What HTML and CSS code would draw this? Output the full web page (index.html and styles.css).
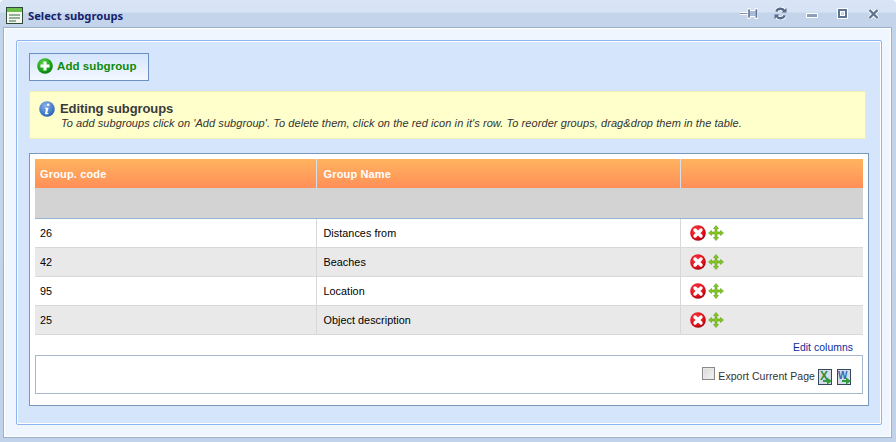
FILE: index.html
```html
<!DOCTYPE html>
<html lang="en">
<head>
<meta charset="utf-8">
<title>Select subgroups</title>
<link rel="stylesheet" href="styles.css">
</head>
<body>
<svg class="defs" width="0" height="0" aria-hidden="true">
  <defs>
    <radialGradient id="redg" cx="40%" cy="35%" r="70%"><stop offset="0" stop-color="#f8404a"/><stop offset="0.7" stop-color="#e00d18"/><stop offset="1" stop-color="#8e0610"/></radialGradient>
    <radialGradient id="greeng" cx="40%" cy="30%" r="75%"><stop offset="0" stop-color="#5fd04f"/><stop offset="0.7" stop-color="#12a012"/><stop offset="1" stop-color="#0a6e12"/></radialGradient>
    <radialGradient id="blueg" cx="40%" cy="30%" r="75%"><stop offset="0" stop-color="#8db2e8"/><stop offset="0.7" stop-color="#3f78c8"/><stop offset="1" stop-color="#2a5aa8"/></radialGradient>
    <symbol id="del" viewBox="0 0 16 16">
      <circle cx="8" cy="8" r="7.800" fill="url(#redg)"/>
      <path d="M5 5l6 6M11 5l-6 6" stroke="#fff" stroke-width="3.400" stroke-linecap="round"/>
    </symbol>
    <symbol id="move" viewBox="0 0 16 16">
      <path d="M8 .5L10.500 3.500H9V7H12.500V5.500L15.500 8L12.500 10.500V9H9V12.500H10.500L8 15.500L5.500 12.500H7V9H3.500V10.500L.5 8L3.500 5.500V7H7V3.500H5.500Z" fill="#86c822" stroke="#5f9e1a" stroke-width=".6"/>
    </symbol>
  </defs>
</svg>
<div class="window">
  <header class="titlebar">
    <svg class="title-icon" width="17" height="17" viewBox="0 0 17 17">
      <rect x=".5" y=".5" width="16" height="16" fill="#f7f7ef" stroke="#2f4a3a"/>
      <rect x="1" y="1" width="15" height="4" fill="#6cc04a"/>
      <path d="M3 8h11M3 11h11M3 14h7" stroke="#2c6a40"/>
    </svg>
    <span class="title-text">Select subgroups</span>
    <div class="title-tools">
      <svg class="tool tool-pin" width="18" height="11" viewBox="0 0 18 11"><path d="M0 5.500h8" stroke="#fff" stroke-width="3"/><path d="M0 5.500h8" stroke="#8090ac"/><path d="M8 .5h2v2h5v-2h2.500v10H15v-2h-5v2H8z" fill="#a9bbd8" stroke="#fff"/><path d="M9 1.500v8M16.500 1.500v8" stroke="#64748f" stroke-width="1.500"/></svg>
      <svg class="tool tool-refresh" width="13" height="13" viewBox="0 0 13 13"><path d="M10.500 4A4.600 4.600 0 0 0 2.300 4.600M2.500 9A4.600 4.600 0 0 0 10.700 8.400" fill="none" stroke="#fff" stroke-width="4"/><path d="M10.500 4A4.600 4.600 0 0 0 2.300 4.600M2.500 9A4.600 4.600 0 0 0 10.700 8.400" fill="none" stroke="#566a88" stroke-width="2.400"/><path d="M7.500 5.500h5V1zM5.500 7.500h-5V12z" fill="#566a88"/></svg>
      <svg class="tool tool-min" width="12" height="5" viewBox="0 0 12 5"><rect x=".5" y=".5" width="11" height="4" fill="#8c9fba" stroke="#fff"/></svg>
      <svg class="tool tool-max" width="11" height="11" viewBox="0 0 11 11"><rect x="2" y="2" width="7" height="7" fill="none" stroke="#fff" stroke-width="4"/><rect x="2" y="2" width="7" height="7" fill="none" stroke="#5f7492" stroke-width="2"/></svg>
      <svg class="tool tool-close" width="11" height="10" viewBox="0 0 11 10"><path d="M1.500 1l8 8M9.500 1l-8 8" stroke="#fff" stroke-width="4"/><path d="M1.500 1l8 8M9.500 1l-8 8" stroke="#5f7492" stroke-width="2.400"/></svg>
    </div>
  </header>
  <div class="frame">
    <main class="panel">
      <button class="add-btn" type="button">
        <svg width="16" height="16" viewBox="0 0 16 16"><circle cx="8" cy="8" r="7.800" fill="url(#greeng)"/><path d="M8 3.500v9M3.500 8h9" stroke="#fff" stroke-width="3"/></svg>
        <span>Add subgroup</span>
      </button>
      <section class="notice">
        <svg class="notice-icon" width="16" height="16" viewBox="0 0 16 16"><circle cx="8" cy="8" r="7.800" fill="url(#blueg)"/><circle cx="9.200" cy="3.800" r="1.300" fill="#fff"/><path d="M6.300 6.800h3.200l-1.300 5.200h1.300l-.3 1.200H5.900l1.100-5.200H6z" fill="#fff"/></svg>
        <div class="notice-body">
          <h2 class="notice-title">Editing subgroups</h2>
          <p class="notice-text">To add subgroups click on 'Add subgroup'. To delete them, click on the red icon in it's row. To reorder groups, drag&amp;drop them in the table.</p>
        </div>
      </section>
      <section class="grid-frame">
        <table class="grid">
          <colgroup><col class="col-code"><col class="col-name"><col></colgroup>
          <thead>
            <tr class="head-row"><th>Group. code</th><th>Group Name</th><th></th></tr>
            <tr class="filter-row"><td colspan="3"></td></tr>
          </thead>
          <tbody>
            <tr><td>26</td><td>Distances from</td><td class="actions"><svg width="16" height="16"><use href="#del"/></svg><svg class="move" width="16" height="16"><use href="#move"/></svg></td></tr>
            <tr class="alt"><td>42</td><td>Beaches</td><td class="actions"><svg width="16" height="16"><use href="#del"/></svg><svg class="move" width="16" height="16"><use href="#move"/></svg></td></tr>
            <tr><td>95</td><td>Location</td><td class="actions"><svg width="16" height="16"><use href="#del"/></svg><svg class="move" width="16" height="16"><use href="#move"/></svg></td></tr>
            <tr class="alt"><td>25</td><td>Object description</td><td class="actions"><svg width="16" height="16"><use href="#del"/></svg><svg class="move" width="16" height="16"><use href="#move"/></svg></td></tr>
          </tbody>
        </table>
        <div class="edit-row"><a class="edit-link" href="#">Edit columns</a></div>
        <div class="export-box">
          <span class="check"></span>
          <span class="export-label">Export Current Page</span>
          <svg class="doc" width="14" height="16" viewBox="0 0 14 16"><rect x=".5" y=".5" width="13" height="15" fill="#d5dde8" stroke="#33475f"/><text x="2" y="11" class="doc-x">X</text><path d="M5 11h4V8.500l5 3.500-5 3.500V13H5z" fill="#2f9d3c"/></svg>
          <svg class="doc" width="14" height="16" viewBox="0 0 14 16"><rect x=".5" y=".5" width="13" height="15" fill="#d5dde8" stroke="#33475f"/><text x="1" y="10" class="doc-w">W</text><path d="M5 11h4V8.500l5 3.500-5 3.500V13H5z" fill="#2f9d3c"/></svg>
        </div>
      </section>
    </main>
  </div>
</div>
</body>
</html>
```
FILE: styles.css
```css
* { box-sizing: border-box; }
html, body { margin: 0; padding: 0; }
body { width: 896px; height: 442px; overflow: hidden; font-family: "Liberation Sans", Arial, sans-serif; background: #fff; }
.defs { display: block; height: 0; }
.window { height: 442px; display: flex; flex-direction: column; padding: 0 4px 4px 3px; background: linear-gradient(#d9e5f5 0, #d6e3f4 12px, #c4d5eb 13px, #c1d3ea 100%); border-radius: 4px 4px 0 0; }
.titlebar { height: 27px; flex: none; display: flex; align-items: center; padding: 0 0 0 3px; }
.title-icon { margin-top: 4px; }
.title-text { margin: 3px 0 0 5px; font-family: "Noto Sans", sans-serif; font-size: 11.200px; font-weight: bold; color: #15226e; }
.title-tools { margin-left: auto; display: flex; align-items: center; padding-right: 13px; }
.tool { display: block; }
.tool-pin { margin-right: 16px; }
.tool-refresh { margin-right: 19px; }
.tool-min { margin-right: 19px; margin-top: 3px; }
.tool-max { margin-right: 20px; }
.frame { flex: 1; border: 1px solid #9cb0c8; box-shadow: inset 0 0 0 1px #fff; background: #eff6ff; padding: 12px 11px 12px 12px; display: flex; }
.panel { flex: 1; display: flex; flex-direction: column; align-items: flex-start; background: #d5e5fb; border: 1px solid #8cb6f0; box-shadow: inset 0 0 0 1px #fff; border-radius: 2px; padding: 12px 12px 0 12px; }
.add-btn { width: 120px; height: 28px; display: flex; align-items: center; gap: 4px; padding: 0 0 3px 7px; border: 1px solid #6c8fc4; background: linear-gradient(#d5e5fb, #f3f8ff); font-family: "Liberation Sans", Arial, sans-serif; font-size: 11.500px; font-weight: bold; letter-spacing: .08px; color: #0b8a0b; }
.notice { width: 837px; height: 48px; margin-top: 10px; display: flex; gap: 5px; padding: 9px 0 0 9px; background: #ffffcc; border: 1px solid #f0eeb8; }
.notice-icon { flex: none; }
.notice-title { margin: 0; font-size: 13px; line-height: 16px; font-weight: bold; letter-spacing: -.1px; color: #3a3a3a; }
.notice-text { margin: 0 0 0 1px; font-size: 11px; line-height: 13px; font-style: italic; color: #333; white-space: nowrap; letter-spacing: .07px; }
.grid-frame { width: 840px; margin-top: 14px; height: 253px; padding: 5px; background: #fff; border: 1px solid #7a98bc; }
.grid { width: 828px; border-collapse: collapse; table-layout: fixed; font-size: 10.800px; color: #000; }
.col-code { width: 281px; }
.col-name { width: 364px; }
.head-row th { height: 29px; padding: 0 7px; text-align: left; font-size: 11px; font-weight: bold; letter-spacing: .15px; color: #fff; background: linear-gradient(#ffb35f, #ff8f58); border-right: 1px solid #d8dfe8; }
.head-row th:first-child { padding-left: 5px; }
.head-row th:last-child { border-right: 0; }
.filter-row td { height: 30px; background: #d3d3d3; border-bottom: 1px solid #95b3d4; padding: 0; }
tbody td { height: 29px; padding: 0 7px; border-right: 1px solid #d8d8d8; border-bottom: 1px solid #d8d8d8; background: #fff; white-space: nowrap; letter-spacing: .05px; }
tbody td:first-child { padding-left: 5px; }
tbody td:last-child { border-right: 0; }
tbody tr.alt td { background: #e9e9e9; }
.actions svg { display: inline-block; vertical-align: middle; }
.actions .move { margin-left: 2px; }
td.actions { padding: 0 0 0 9px; line-height: 0; }
.edit-row { height: 20px; display: flex; align-items: center; justify-content: flex-end; padding: 6px 10px 0 0; }
.edit-link { font-size: 10.400px; color: #0b2e9c; text-decoration: none; letter-spacing: .05px; }
.export-box { width: 828px; height: 39px; display: flex; align-items: center; justify-content: flex-end; padding: 0 11px 0 0; border: 1px solid #a6b8ce; }
.check { width: 13px; height: 13px; margin: -1px 3px 0 0; border: 1px solid #8a8a8a; background: linear-gradient(135deg, #d8d8d8, #f4f4f4); box-shadow: inset 0 0 0 1px #e8e8e8; }
.export-label { font-size: 10.500px; color: #333; letter-spacing: .05px; margin: 4px 3px 0 0; }
.doc { margin-top: 6px; }
.doc + .doc { margin-left: 5px; }
.doc-x, .doc-w { font-family: "Liberation Sans", Arial, sans-serif; font-weight: bold; }
.doc-x { fill: #2e8b3a; font-size: 12px; }
.doc-w { fill: #3a62b0; font-size: 10px; }
```
